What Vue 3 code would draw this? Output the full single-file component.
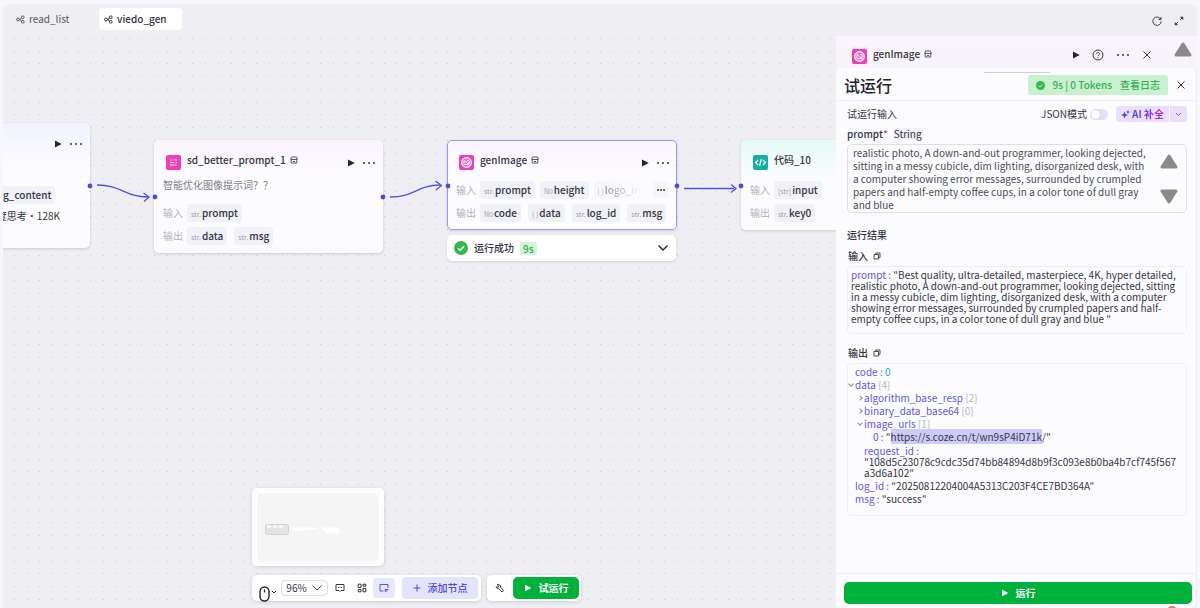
<script setup>
import { ref } from 'vue'

const tabs = [
  { name: 'read_list', active: false },
  { name: 'viedo_gen', active: true },
]

const nodes = [
  {
    id: 'prompt', title: 'sd_better_prompt_1', icon: 'text', tone: 'pink', shop: true, actions: true,
    desc: '智能优化图像提示词？？',
    rows: [
      { label: '输入', chips: [['str.', 'prompt']] },
      { label: '输出', chips: [['str.', 'data'], ['str.', 'msg']] },
    ],
  },
  {
    id: 'image', title: 'genImage', icon: 'image', tone: 'pink', shop: true, actions: true, selected: true,
    rows: [
      { label: '输入', chips: [['str.', 'prompt'], ['N0', 'height'], ['{ }', 'logo_in']], more: true },
      { label: '输出', chips: [['N0', 'code'], ['{ }', 'data'], ['str.', 'log_id'], ['str.', 'msg']] },
    ],
  },
  {
    id: 'code', title: '代码_10', icon: 'code', tone: 'teal',
    rows: [
      { label: '输入', chips: [['[str]', 'input']] },
      { label: '输出', chips: [['str.', 'key0']] },
    ],
  },
]

const ports = [[87, 150], [152, 161], [380, 161], [445, 150], [674, 150], [738, 150]]

const promptText = ref('realistic photo, A down-and-out programmer, looking dejected, sitting in a messy cubicle, dim lighting, disorganized desk, with a computer showing error messages, surrounded by crumpled papers and half-empty coffee cups, in a color tone of dull gray and blue')
const json = ref(false)
const zoom = ref('96%')
</script>

<template>
  <div class="app">
    <header class="topbar">
      <nav class="tabs">
        <a v-for="t in tabs" :key="t.name" href="#" class="tab" :class="{ active: t.active }">
          <svg width="9" height="9" viewBox="0 0 9 9" fill="none" stroke="currentColor" stroke-width="1">
            <circle cx="2" cy="4.500" r="1.400" /><rect x="5.500" y="1" width="2.500" height="2.500" rx=".8" /><rect x="5.500" y="5.500" width="2.500" height="2.500" rx=".8" />
            <path d="M3.400 4.500h1l1-2M4.400 4.500l1 2" />
          </svg>
          <span>{{ t.name }}</span>
        </a>
      </nav>
      <div class="top-actions">
        <button aria-label="刷新"><svg width="12" height="12" viewBox="0 0 12 12" fill="none" stroke="#3c3d48" stroke-width="1"><path d="M9.700 4.200A4.200 4.200 0 1 0 10.200 6.400M10 2v2.500H7.500" /></svg></button>
        <button aria-label="展开"><svg width="12" height="12" viewBox="0 0 12 12" fill="none" stroke="#3c3d48" stroke-width="1"><path d="M7 5l2.500-2.500M5 7L2.500 9.500" /><path d="M7.500 2h2.500v2.500zM2 7.500V10h2.500z" fill="#3c3d48" stroke-width=".6" /></svg></button>
      </div>
    </header>

    <div class="workspace">
      <main class="canvas">
        <svg class="backdrop" width="100%" height="100%">
          <defs>
            <pattern id="grid" width="51" height="51" patternUnits="userSpaceOnUse">
              <g fill="#cacad1">
                <template v-for="y in [2, 15, 27, 40]" :key="y">
                  <rect v-for="x in [11, 24, 36, 49]" :key="x" :x="x" :y="y" width="1" height="1" />
                </template>
              </g>
            </pattern>
          </defs>
          <rect width="100%" height="100%" fill="url(#grid)" />
        </svg>

        <section class="node node-model">
          <div class="node-actions">
            <svg class="play" width="8" height="8" viewBox="0 0 8 8"><path d="M1 .5v7L7.700 4z" /></svg>
            <span class="dots"><i /><i /><i /></span>
          </div>
          <div class="chip">g_content</div>
          <div class="model-name">度思考・128K</div>
        </section>

        <section v-for="n in nodes" :key="n.id" class="node" :class="['node-' + n.id, n.tone, { selected: n.selected }]">
          <header class="node-head">
            <span class="badge-icon" :class="n.tone">
              <svg v-if="n.icon === 'text'" width="15" height="15" viewBox="0 0 15 15" stroke="#ffd9f2" stroke-width="1.100" fill="none"><path d="M4 5h2M7.500 5h3.500M4 7.500h4M9.500 7.500H11M4 10h7" /></svg>
              <svg v-else-if="n.icon === 'image'" width="15" height="15" viewBox="0 0 15 15" stroke="#fff" fill="none"><circle cx="7.500" cy="7.500" r="4.800" fill="#ffffff44" stroke-width="1.200" /><path d="M5 5.500v4h5v-4M5 5l4.500 4.500M8 5.500h2" stroke-width=".8" /></svg>
              <svg v-else width="15" height="15" viewBox="0 0 15 15" stroke="#fff" stroke-width="1.200" fill="none"><path d="M5 5L2.700 7.500 5 10M10 5l2.300 2.500L10 10M8.400 4L6.600 11" /></svg>
            </span>
            <h3>{{ n.title }}</h3>
            <svg v-if="n.shop" class="shop" width="8" height="8" viewBox="0 0 8 8"><path d="M1.500 1h5l.8 2.500H.7zM1.200 3.500V7h5.600V3.500M3 5.500h2" /></svg>
            <div v-if="n.actions" class="node-actions">
              <button aria-label="运行节点"><svg class="play" width="8" height="8" viewBox="0 0 8 8"><path d="M1 .5v7L7.700 4z" /></svg></button>
              <button aria-label="更多"><span class="dots"><i /><i /><i /></span></button>
            </div>
          </header>
          <p v-if="n.desc" class="desc">{{ n.desc }}</p>
          <div v-for="r in n.rows" :key="r.label" class="row" :class="{ faded: r.more }">
            <span class="row-label">{{ r.label }}</span>
            <span class="chips">
              <span v-for="c in r.chips" :key="c[1]" class="chip"><small>{{ c[0] }}</small>{{ c[1] }}</span>
            </span>
            <span v-if="r.more" class="more"><span class="dots"><i /><i /><i /></span></span>
          </div>
        </section>

        <button class="status">
          <svg width="14" height="14" viewBox="0 0 14 14"><circle cx="7" cy="7" r="7" fill="#36b84c" /><path d="M4 7.200l2.200 2.100L10 5.300" fill="none" stroke="#fff" stroke-width="1.400" /></svg>
          <span>运行成功</span><b>9s</b>
          <svg class="status-arrow" width="12" height="8" viewBox="0 0 12 8" fill="none" stroke="#20212b" stroke-width="1.400"><path d="M1.500 1.500L6 6l4.500-4.500" /></svg>
        </button>

        <svg class="edges" width="100%" height="100%">
          <g fill="none" stroke="#5350df" stroke-width="1.300">
            <path d="M94 149C118 149 122 161 145 161M140.500 157l5.500 4-5 4.500" />
            <path d="M387 161C412 161 414 149 437 149M432.500 145l6 4.500-5.500 4.500" />
            <path d="M681 152.500h50M728 148.500l5 4-5 4" />
          </g>
          <circle v-for="(p, i) in ports" :key="i" :cx="p[0]" :cy="p[1]" r="2.400" fill="#4c49dc" />
        </svg>

        <div class="dock">
          <div class="minimap">
            <svg width="100%" height="68" viewBox="0 0 122 68">
              <rect x="0" y="0" width="122" height="68" rx="5" fill="#f5f5f6" />
              <rect x="8.500" y="31.500" width="23" height="10" rx="2" fill="#e4e4e5" stroke="#d2d2d4" />
              <path d="M10 33.500h18" stroke="#fff" stroke-width="2" stroke-dasharray="4 2" />
              <path d="M34 35h25v1l-20 2zM64 35h18v5H70z" fill="#fff" stroke="#fff" stroke-linejoin="round" />
            </svg>
          </div>
          <div class="bars">
            <div class="bar">
              <button class="mouse" aria-label="鼠标模式">
                <svg width="19" height="16" viewBox="0 0 19 16" fill="none" stroke="#24252e"><rect x="1" y="1" width="9" height="14" rx="4.500" stroke-width="1.400" /><path d="M5.500 3.500v3" stroke-width="1.300" /><path d="M13 5l2 2 2-2" /></svg>
              </button>
              <button class="zoom">{{ zoom }}<svg width="12" height="8" viewBox="0 0 12 8" fill="none" stroke="#4a4b55"><path d="M1.500 1.500L6 6l4.500-4.500" /></svg></button>
              <button class="tool" aria-label="注释"><svg width="10" height="10" viewBox="0 0 10 10"><path d="M1 1.500h8v6H6L5 8.500l-1-1H1zM3 4.500h1M4.700 4.500h.8M6.200 4.500h.8" /></svg></button>
              <button class="tool" aria-label="整理布局"><svg width="10" height="10" viewBox="0 0 10 10"><path d="M1.200 1.200h2.800v3.300H1.200zM6 1.200h2.800v2H6zM1.200 6.500h2.800v2.300H1.200zM6 5.300h2.800v3.500H6z" /></svg></button>
              <button class="tool on" aria-label="缩略图"><svg width="10" height="10" viewBox="0 0 10 10"><path d="M4.500 8H1V1.500h8V5M6 6.500h3l-2.500 2.500z" /></svg></button>
              <button class="add"><svg width="8" height="8" viewBox="0 0 8 8" stroke="currentColor"><path d="M4 .5v7M.5 4h7" /></svg>添加节点</button>
            </div>
            <div class="bar bar-run">
              <button class="tool" aria-label="调试"><svg width="10" height="10" viewBox="0 0 10 10"><path d="M2 1.500l1.800 1.700L3.200 4.300 1.200 3.700c0 1.500 1.200 2.300 2.600 2L7 9l1.700-1.500L5.600 4.300C6 2.500 4.300.8 2 1.500z" /></svg></button>
              <button class="run"><svg width="8" height="8" viewBox="0 0 8 8"><path d="M1 .8v6.400L7.300 4z" fill="#fff" /></svg>试运行</button>
            </div>
          </div>
        </div>
      </main>

      <aside class="panel">
        <header class="panel-head">
          <span class="badge-icon pink"><svg width="15" height="15" viewBox="0 0 15 15" stroke="#fff" fill="none"><circle cx="7.500" cy="7.500" r="4.800" fill="#ffffff44" stroke-width="1.200" /><path d="M5 5.500v4h5v-4M5 5l4.500 4.500M8 5.500h2" stroke-width=".8" /></svg></span>
          <h3>genImage</h3>
          <svg class="shop" width="8" height="8" viewBox="0 0 8 8"><path d="M1.500 1h5l.8 2.500H.7zM1.200 3.500V7h5.600V3.500M3 5.500h2" /></svg>
          <div class="panel-actions">
            <button aria-label="运行"><svg class="play" width="8" height="8" viewBox="0 0 8 8"><path d="M1 .5v7L7.700 4z" /></svg></button>
            <button aria-label="帮助"><svg width="12" height="12" viewBox="0 0 12 12" fill="none" stroke="#34353f"><circle cx="6" cy="6" r="5" /><path d="M4.500 5c0-2 3-2 3-.2C7.500 6 6 6 6 7.200M6 8.200v1" /></svg></button>
            <button aria-label="更多"><span class="dots"><i /><i /><i /></span></button>
            <button aria-label="关闭"><svg width="10" height="10" viewBox="0 0 10 10" stroke="#34353f"><path d="M1.500 1.500l7 7M8.500 1.500l-7 7" /></svg></button>
          </div>
          <svg class="scroll-up" width="18" height="15" viewBox="0 0 18 15"><path d="M9 2l7 11H2z" /></svg>
        </header>

        <div class="run-card">
          <span class="handle" />
          <header class="run-head">
            <h2>试运行</h2>
            <a href="#" class="result-tag">
              <svg width="9" height="9" viewBox="0 0 9 9"><circle cx="4.500" cy="4.500" r="4.500" fill="#36b84c" /><path d="M2.600 4.600L4 6l2.500-2.600" fill="none" stroke="#c9f1d0" /></svg>
              <span>9s | 0 Tokens</span><span>查看日志</span>
            </a>
            <button aria-label="关闭试运行"><svg width="10" height="10" viewBox="0 0 10 10" stroke="#34353f"><path d="M1.500 1.500l7 7M8.500 1.500l-7 7" /></svg></button>
          </header>

          <div class="run-body">
            <div class="input-head">
              <span>试运行输入</span>
              <label class="switch">JSON模式<input v-model="json" type="checkbox" role="switch"></label>
              <div class="ai">
                <button><svg width="9" height="9" viewBox="0 0 9 9" fill="#4f46e5"><path d="M3.500 1.500l1 2.400L7 5 4.500 6l-1 2.500-1-2.500L0 5l2.500-1.100zM7 0l.6 1.400L9 2l-1.400.6L7 4l-.6-1.400L5 2l1.400-.6z" /></svg><span>AI 补全</span></button>
                <button aria-label="补全选项"><svg width="7" height="5" viewBox="0 0 7 5" fill="none" stroke="#a04be8"><path d="M1 1l2.500 2.500L6 1" /></svg></button>
              </div>
            </div>
            <div class="field-label"><label for="prompt">prompt<em>*</em></label><span>String</span></div>
            <div class="field">
              <textarea id="prompt" v-model="promptText" />
              <div class="spinner">
                <svg width="18" height="15" viewBox="0 0 18 15"><path d="M9 2l7 11H2z" /></svg>
                <svg width="18" height="15" viewBox="0 0 18 15"><path d="M9 13L2 2h14z" /></svg>
              </div>
            </div>

            <h4 class="result-title">运行结果</h4>
            <h4 class="sub">输入 <button aria-label="复制输入"><svg width="8" height="8" viewBox="0 0 8 8"><path d="M1 2.500h4.500v4.500H1zM2.800 2.500V1h4.200v4.500H5.500" /></svg></button></h4>
            <div class="box box-in"><span class="key">prompt : </span>"Best quality, ultra-detailed, masterpiece, 4K, hyper detailed, realistic photo, A down-and-out programmer, looking dejected, sitting in a messy cubicle, dim lighting, disorganized desk, with a computer showing error messages, surrounded by crumpled papers and half-empty coffee cups, in a color tone of dull gray and blue "</div>

            <h4 class="sub">输出 <button aria-label="复制输出"><svg width="8" height="8" viewBox="0 0 8 8"><path d="M1 2.500h4.500v4.500H1zM2.800 2.500V1h4.200v4.500H5.500" /></svg></button></h4>
            <ul class="box tree">
              <li><span class="key">code : </span><span class="num">0</span></li>
              <li class="open"><span class="key">data</span> <span class="count">{4}</span>
                <ul>
                  <li class="closed"><span class="key">algorithm_base_resp</span> <span class="count">{2}</span></li>
                  <li class="closed"><span class="key">binary_data_base64</span> <span class="count">{0}</span></li>
                  <li class="open"><span class="key">image_urls</span> <span class="count">[1]</span>
                    <ul><li><span class="key">0 : </span>"<mark>https://s.coze.cn/t/wn9sP4iD71k</mark>/"</li></ul>
                  </li>
                  <li class="long"><span class="key">request_id : </span><br>"108d5c23078c9cdc35d74bb84894d8b9f3c093e8b0ba4b7cf745f567a3d6a102"</li>
                </ul>
              </li>
              <li><span class="key">log_id : </span>"20250812204004A5313C203F4CE7BD364A"</li>
              <li><span class="key">msg : </span>"success"</li>
            </ul>
          </div>

          <footer class="run-foot">
            <button class="run"><svg width="8" height="8" viewBox="0 0 8 8"><path d="M1 .8v6.400L7.300 4z" fill="#fff" /></svg>运行</button>
            <span class="alert-dot" />
          </footer>
        </div>
      </aside>
    </div>
  </div>
</template>

<style>
body { background: #f8f7fd; }
</style>

<style scoped>
* { box-sizing: border-box; }
.app { height: 100vh; padding: 4px 3px 0; display: flex; flex-direction: column; overflow: hidden; font-family: "Noto Sans CJK SC", "Noto Sans", sans-serif; font-size: 10px; line-height: 14px; color: #34353f; }
h2, h3, h4, p, ul { margin: 0; padding: 0; font-weight: 500; }
ul { font-weight: 400; }
button { font: inherit; color: inherit; border: 0; padding: 0; background: none; display: inline-flex; align-items: center; justify-content: center; cursor: pointer; }
a { color: inherit; text-decoration: none; }
svg { display: block; flex: none; }
.topbar { height: 32px; flex: none; display: flex; justify-content: space-between; align-items: flex-start; background: #efeff3; border-radius: 6px 6px 0 0; padding: 4px 12px 0 8px; }
.tabs { display: flex; gap: 8px; }
.tab { display: flex; align-items: center; gap: 4px; height: 22px; width: 80px; padding: 0 5px; border-radius: 4px; color: #55565f; }
.tab.active { background: #fff; color: #30313a; font-weight: 500; width: 83px; }
.top-actions { display: flex; gap: 10px; padding-top: 7px; }
.workspace { flex: 1; min-height: 0; display: flex; }
.canvas { flex: 1; min-width: 0; position: relative; overflow: hidden; background: #efeff3; }
.backdrop, .edges { position: absolute; inset: 0; pointer-events: none; }

.node { position: absolute; border-radius: 5px; background: #fcfcff; box-shadow: 0 1px 3px #00000026; padding: 12px 9px 0; }
.node.pink { background: linear-gradient(#fcf4fd, #fcfcff 40px); }
.node.teal { background: linear-gradient(#e6faf8, #fcfcff 40px); }
.node.selected { outline: 1px solid #9d98ec; outline-offset: -1px; }
.node-model { left: -5px; top: 87px; width: 92px; height: 125px; padding: 14px 9px 0 1px; background: linear-gradient(#f0f3ff, #fcfcff 40px); }
.node-prompt { left: 151px; top: 104px; width: 229px; height: 113px; }
.node-image { left: 444px; top: 104px; width: 230px; height: 90px; }
.node-code { left: 738px; top: 104px; width: 229px; height: 90px; }
.node-actions { margin-left: auto; margin-right: -2px; display: flex; align-items: center; justify-content: flex-end; gap: 7px; }
.node-head { display: flex; align-items: center; height: 18px; padding-left: 3px; }
.node-head .node-actions { padding-top: 4px; }
.node-model .chip { margin-top: 35px; display: table; }
.node-model .node-actions { height: 14px; }
.model-name { margin-top: 5px; white-space: nowrap; display: flex; justify-content: flex-end; padding-right: 21px; }
.play { fill: #24252e; }
.dots { display: inline-flex; gap: 3px; padding: 0 1px; }
.dots i { width: 2px; height: 2px; border-radius: 1px; background: #34353f; }
.badge-icon { width: 15px; height: 15px; margin-top: 3px; margin-right: 6px; border-radius: 2px; flex: none; }
.badge-icon.pink { background: #ee3fb4; }
.badge-icon.teal { background: #14b0a4; }
h3, .shop { margin-bottom: 3px; }
h3 { font-size: 10px; }
.shop { margin-left: 4px; fill: none; stroke: #55565f; stroke-width: 1; }
.desc { margin-top: 8px; color: #7c7d88; font-weight: 400; }
.row { display: flex; align-items: center; gap: 4px; height: 18px; margin-top: 5px; }
.desc + .row { margin-top: 12px; }
.node-head + .row { margin-top: 11px; }
.row-label { flex: none; color: #b2b3bb; }
.chips { display: flex; gap: 7px; }
.faded .chips { gap: 5px; }
.chip { flex: none; height: 18px; line-height: 18px; padding: 0 4px; background: #f1f1f8; border-radius: 3px; font-weight: 500; white-space: nowrap; }
.chip small { font-size: 7px; font-weight: 400; color: #9a9ba7; margin-right: 1px; }
.faded .chip:nth-child(3) { width: 48px; overflow: hidden; -webkit-mask-image: linear-gradient(90deg, #000a, #0000); mask-image: linear-gradient(90deg, #000a, #0000); }
.more { margin-left: auto; width: 15px; height: 16px; display: flex; align-items: center; justify-content: center; background: #f5f5fa; }
.more .dots { gap: 1px; }
.status { position: absolute; left: 444px; top: 199px; width: 229px; height: 26px; padding: 0 7px; justify-content: flex-start; gap: 6px; background: #fff; border-radius: 5px; box-shadow: 0 1px 3px #00000020; font-weight: 500; }
.status b { background: #d3f3da; color: #2fae4c; font-weight: 500; padding: 0 3px; border-radius: 2px; line-height: 13px; }
.status-arrow { margin-left: auto; }

.dock { position: absolute; left: 249px; bottom: 7px; display: flex; flex-direction: column; align-items: flex-start; gap: 9px; }
.minimap { background: #fff; width: 132px; padding: 5px; border-radius: 5px; box-shadow: 0 1px 4px #00000022; }
.bars { display: flex; gap: 6px; }
.bar { height: 26px; display: flex; align-items: center; background: #fff; border-radius: 5px; box-shadow: 0 1px 4px #00000022; padding: 0 3px 0 7px; }
.mouse { align-self: flex-end; margin-bottom: -1px; }
.zoom { height: 16px; margin: 0 1px 0 3px; width: 47px; gap: 4px; border: 1px solid #dcdce4; border-radius: 4px; }
.tool { width: 22px; height: 20px; border-radius: 4px; }
.tool svg { fill: none; stroke: #34353f; }
.tool.on { background: #e8e8ff; }
.tool.on svg { stroke: #5a50e8; }
.add { margin-left: 7px; width: 76px; height: 22px; gap: 7px; border-radius: 4px; background: #e4e4fc; color: #4f49e0; font-weight: 500; }
.bar-run { padding: 0 2px; }
.bar-run .run { width: 66px; margin-left: 2px; }
.run { height: 22px; gap: 7px; background: #00b23c; color: #fff; border-radius: 5px; font-weight: 700; }

.panel { width: 361px; flex: none; display: flex; flex-direction: column; background: #f3f3f7; border-radius: 6px 6px 0 0; }
.panel-head { height: 32px; flex: none; display: flex; align-items: center; padding: 5px 5px 0 16px; background: linear-gradient(#fbf3fd, #f6f4f9); border-radius: 6px 6px 0 0; }
.panel-head h3, .panel-head .shop { margin-bottom: 2px; }
.panel-actions { margin-left: auto; display: flex; align-items: center; gap: 12px; }
.panel-head .scroll-up { margin-left: 22px; margin-top: -10px; }
.scroll-up, .spinner svg { fill: #8a8a8a; stroke: #8a8a8a; stroke-width: 3; stroke-linejoin: round; }
.run-card { flex: 1; min-height: 0; display: flex; flex-direction: column; position: relative; background: #fcfcff; border-radius: 6px 6px 0 0; border-right: 1px solid #ececf1; }
.handle { position: absolute; top: 4px; left: 50%; width: 66px; height: 1px; margin-left: -32px; background: #cfcfd8; }
.run-head { height: 33px; flex: none; display: flex; align-items: center; gap: 8px; border-bottom: 1px solid #ededf2; padding: 2px 10px 0 8px; }
h2 { font-size: 16px; line-height: 20px; color: #20212b; }
.result-tag { margin-left: auto; height: 20px; display: flex; align-items: center; gap: 8px; padding: 0 8px; border-radius: 3px; background: #c9f1d0; color: #36b050; font-weight: 500; }
.run-body { flex: 1; min-height: 0; padding: 5px 9px 0 11px; }
.input-head { display: flex; align-items: center; height: 16px; }
.switch { margin-left: auto; display: flex; align-items: center; gap: 3px; }
.switch input { appearance: none; margin: 0 8px 0 0; width: 18px; height: 11px; border-radius: 6px; background: #e3e2f5; display: flex; align-items: center; padding: 0 1px; }
.switch input::before { content: ""; width: 9px; height: 9px; border-radius: 5px; background: #fff; box-shadow: 0 0 1px #0004; }
.ai { display: flex; gap: 1px; height: 16px; }
.ai button { background: #ecdffd; gap: 2px; padding: 0 5px; border-radius: 3px 0 0 3px; font-weight: 700; }
.ai button + button { border-radius: 0 3px 3px 0; }
.ai button span { background: linear-gradient(90deg, #5146e8, #a92be0); -webkit-background-clip: text; background-clip: text; color: transparent; }
.field-label { display: flex; align-items: center; gap: 5px; height: 14px; margin-top: 5px; font-weight: 500; }
.field-label em { color: #e5484d; font-style: normal; }
.field-label span { background: #f0f0f6; font-weight: 400; padding: 0 1px; line-height: 12px; }
.field { margin-top: 3px; height: 69px; display: flex; gap: 13px; border: 1px solid #dfdfe7; border-radius: 5px; padding: 1px 8px 0 5px; }
textarea { flex: 1; min-width: 0; border: 0; padding: 0; outline: 0; resize: none; overflow: hidden; background: none; font: inherit; line-height: 13px; color: #4a4b55; }
.spinner { display: flex; flex-direction: column; justify-content: space-between; padding: 8px 0; }
.result-title { margin-top: 15px; }
.sub { display: flex; align-items: center; gap: 5px; margin: 7px 0 3px 1px; height: 14px; }
.sub svg { fill: none; stroke: #4a4b55; stroke-width: 1; }
.box { border: 1px solid #f0f0f4; border-radius: 4px; }
.box-in { height: 68px; padding: 2px 4px 0 3px; line-height: 11px; margin-bottom: 12px; }
.key { color: #6257e0; }
.count { color: #b9b9c3; }
.num { color: #16b1b8; }
.tree { padding: 1px 7px 10px; line-height: 13px; list-style: none; }
.tree ul { list-style: none; padding-left: 9px; }
.tree li { position: relative; }
.tree .long { line-height: 11px; word-break: break-all; padding: 2px 0 1px; }
.open::before, .closed::before { content: ""; position: absolute; left: -6px; top: 4px; width: 3px; height: 3px; border: solid #8e8f9a; border-width: 0 1px 1px 0; transform: rotate(45deg); }
.closed::before { top: 5px; transform: rotate(-45deg); }
mark { background: #cdcbf9; color: inherit; }
.run-foot { position: relative; flex: none; border-top: 1px solid #ededf2; height: 35px; padding: 8px 4px 0 8px; }
.run-foot .run { width: 100%; }
.alert-dot { position: absolute; right: 19px; bottom: -8px; width: 10px; height: 10px; border-radius: 5px; background: #ee6a6a; }
</style>
